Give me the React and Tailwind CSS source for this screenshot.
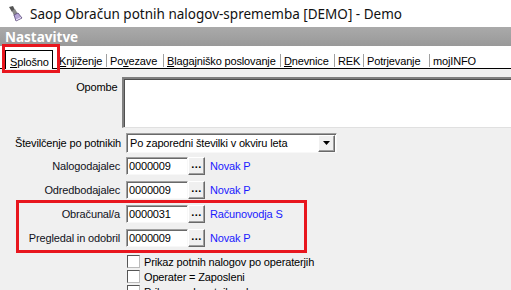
import { useState } from 'react';

const sunken =
  'border border-t-[#a0a0a0] border-l-[#a0a0a0] border-r-[#f8f8f8] border-b-[#f8f8f8] shadow-[inset_1px_1px_0_#696969] bg-white';
const raised =
  'border border-t-[#fff] border-l-[#fff] border-r-[#696969] border-b-[#696969] shadow-[inset_-1px_-1px_0_#a0a0a0] bg-[#f0f0f0]';

const tabs = [
  { label: 'Knjiženje', u: 0, w: 'w-[50px]', sep: false },
  { label: 'Povezave', u: 2, w: 'w-[57px]', sep: true },
  { label: 'Blagajniško poslovanje', u: 0, w: 'w-[117px]', sep: true },
  { label: 'Dnevnice', u: 0, w: 'w-[54px]', sep: true },
  { label: 'REK', u: -1, w: 'w-[29px]', sep: true },
  { label: 'Potrjevanje', u: -1, w: 'w-[66px]', sep: true },
  { label: 'mojINFO', u: -1, w: 'w-[60px]', sep: true },
];

const Mnemonic = ({ text, u }) => {
  if (u < 0) return text;
  return (
    <>
      {text.slice(0, u)}
      <span className="underline underline-offset-[1px]">{text[u]}</span>
      {text.slice(u + 1)}
    </>
  );
};

const LookupRow = ({ label, code, name }) => (
  <div className="flex items-center h-[18px]">
    <div className="w-[121px] text-right pr-[1px] text-[#101020] whitespace-nowrap">{label}</div>
    <div className={`ml-[5px] w-[62px] h-[18px] pl-[2px] flex items-center ${sunken}`}>{code}</div>
    <button className={`w-[17px] h-[18px] flex items-center justify-center ${raised}`}>
      <span className="font-bold leading-none tracking-[0.5px] -mt-[3px]">...</span>
    </button>
    <span className="ml-[5px] text-[#1a1aff]">{name}</span>
  </div>
);

const Check = ({ label }) => (
  <label className="flex items-center h-[15px] ml-[127px] gap-[4px]">
    <span className="w-[13px] h-[13px] bg-white border border-t-[#555] border-l-[#555] border-r-[#bbb] border-b-[#bbb]" />
    <span>{label}</span>
  </label>
);

export default function App() {
  const [notes, setNotes] = useState('');

  return (
    <div className="relative w-[511px] h-[290px] overflow-hidden bg-[#f0f0f0] font-['Liberation_Sans',sans-serif] text-[11px] tracking-[-0.15px] leading-[14px] text-black">
      {/* Title bar */}
      <div className="h-[27px] bg-white flex items-center pl-[7px] gap-[7px] font-['Noto_Sans',sans-serif] tracking-normal">
        <svg width="16" height="16" viewBox="0 0 16 16">
          <path d="M2 1 L6 0 L8 4 L5 6 Z" fill="#555" />
          <path d="M5 5 L8 3 L11 8 L7 10 Z" fill="#8a8a8a" />
          <path d="M7 9 L11 7 L15 12 L9 15 Z" fill="#b6a6d6" stroke="#5a4a7a" strokeWidth="0.8" />
          <path d="M9 14 L14 11.5" stroke="#f0e8ff" strokeWidth="1" />
        </svg>
        <span className="text-[13.5px] text-[#111]">Saop Obračun potnih nalogov-sprememba [DEMO] - Demo</span>
      </div>

      {/* Section header */}
      <div className="h-[19px] bg-gradient-to-b from-[#aaaaaa] to-[#999999] flex items-center pl-[5px] font-['Noto_Sans',sans-serif] tracking-normal">
        <span className="text-white font-bold text-[13.5px]">Nastavitve</span>
      </div>

      {/* Tabs */}
      <div className="h-[23px] bg-white border-b border-black flex items-end whitespace-nowrap">
        <div className="ml-[5px] w-[48px] h-[19px] bg-white border border-black border-b-0 -mb-[1px] pl-[4px] pt-[4px]">
          <Mnemonic text="Splošno" u={0} />
        </div>
        <div className="w-[3px]" />
        {tabs.map((t) => (
          <div
            key={t.label}
            className={`${t.w} h-[13px] mb-[1px] flex items-center pl-[3px] ${
              t.sep ? 'border-l border-[#a0a0a0]' : ''
            }`}
          >
            <Mnemonic text={t.label} u={t.u} />
          </div>
        ))}
      </div>

      {/* Form */}
      <div className="pt-[8px] flex flex-col">
        <div className="flex">
          <div className="w-[121px] text-right pt-[3px]">Opombe</div>
          <textarea
            value={notes}
            onChange={(e) => setNotes(e.target.value)}
            className="ml-[5px] w-[400px] h-[51px] resize-none bg-white border-t-2 border-l-2 border-[#808080] border-r-0 border-b border-b-[#e0e0e0] shadow-[inset_1px_1px_0_#505050] outline-none px-[2px] caret-black"
            autoFocus
          />
        </div>

        <div className="flex items-center mt-[5px] h-[20px]">
          <div className="w-[121px] text-right whitespace-nowrap">Številčenje po potnikih</div>
          <div className={`ml-[5px] w-[211px] h-[20px] flex items-center justify-between pl-[3px] ${sunken}`}>
            <span className="whitespace-nowrap">Po zaporedni številki v okviru leta</span>
            <span className={`shrink-0 w-[17px] h-[17px] mr-[1px] flex items-center justify-center ${raised}`}>
              <svg width="7" height="4" viewBox="0 0 7 4">
                <path d="M0 0 H7 L3.5 4 Z" fill="#000" />
              </svg>
            </span>
          </div>
        </div>

        <div className="flex flex-col gap-[6px] mt-[4px]">
          <LookupRow label="Nalogodajalec" code="0000009" name="Novak P" />
          <LookupRow label="Odredbodajalec" code="0000009" name="Novak P" />
          <LookupRow label="Obračunal/a" code="0000031" name="Računovodja S" />
          <LookupRow label="Pregledal in odobril" code="0000009" name="Novak P" />
        </div>

        <div className="flex flex-col mt-[7px]">
          <Check label="Prikaz potnih nalogov po operaterjih" />
          <Check label="Operater = Zaposleni" />
          <Check label="Prikaz vseh potnih nalogov" />
        </div>
      </div>

      {/* Red highlight annotations */}
      <div className="absolute left-[2px] top-[44px] w-[58px] h-[29px] border-[3px] border-[#e8161e]" />
      <div className="absolute left-[16px] top-[200px] w-[291px] h-[53px] border-[3px] border-[#e8161e]" />
    </div>
  );
}
